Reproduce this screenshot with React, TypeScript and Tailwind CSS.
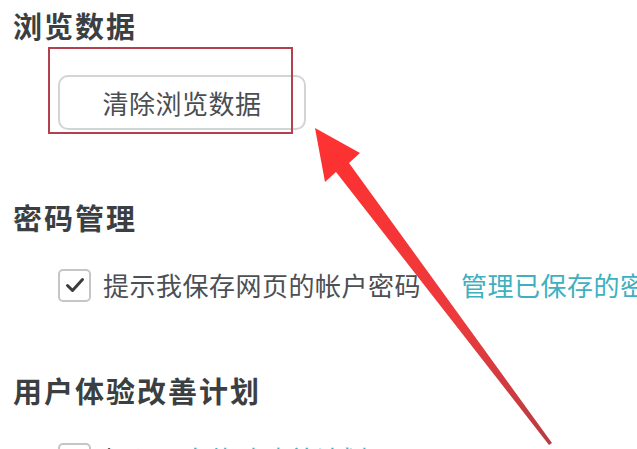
import React from 'react';

const cjk = { fontFamily: '"Noto Sans CJK SC", "Noto Sans", sans-serif' };

function Heading({ children, className = '' }: { children: React.ReactNode; className?: string }) {
  return (
    <div className={`h-[30px] flex items-center text-[29px] leading-none font-semibold text-[#3b3f42] tracking-[2px] ${className}`}>
      {children}
    </div>
  );
}

function Checkbox({ checked }: { checked?: boolean }) {
  return (
    <div className="w-[33px] h-[33px] rounded-[5px] border-2 border-[#c4c6c8] bg-white flex items-center justify-center shrink-0">
      {checked && (
        <svg width="20" height="16" viewBox="0 0 20 16" fill="none">
          <path d="M2.5 8.5 L7.5 13.5 L17.5 2.5" stroke="#3a3d40" strokeWidth="3" strokeLinecap="round" strokeLinejoin="round" />
        </svg>
      )}
    </div>
  );
}

export default function App() {
  return (
    <div className="relative w-[637px] h-[449px] overflow-hidden bg-white" style={cjk}>
      <div className="flex flex-col pl-[13px] pt-[10px]">
        {/* 浏览数据 */}
        <Heading>浏览数据</Heading>
        <div className="mt-[35px] ml-[45px]">
          <button className="w-[248px] h-[55px] rounded-[10px] border-2 border-[#d2d4d6] bg-white text-[26px] text-[#4a4e52] leading-none tracking-[0.5px] flex items-center justify-center">
            清除浏览数据
          </button>
        </div>

        {/* 密码管理 */}
        <Heading className="mt-[72px]">密码管理</Heading>
        <div className="mt-[36px] ml-[45px] flex items-center h-[34px] text-[26px] leading-none tracking-[0.5px] whitespace-nowrap">
          <Checkbox checked />
          <span className="ml-[12px] text-[#4c5054]">提示我保存网页的帐户密码</span>
          <span className="ml-[40px] text-[#3fb0bf]">管理已保存的密码</span>
        </div>

        {/* 用户体验改善计划 */}
        <Heading className="mt-[73px]">用户体验改善计划</Heading>
        <div className="mt-[37px] ml-[45px] flex items-center h-[34px] text-[26px] leading-none tracking-[0.5px] whitespace-nowrap">
          <Checkbox />
          <span className="ml-[12px] text-[#4c5054]">加入</span>
          <span className="text-[#3fb0bf]">用户体验改善计划</span>
        </div>
      </div>

      {/* red annotation box */}
      <div className="absolute left-[48px] top-[47px] w-[245px] h-[87px] border-2 border-[#b2404e]" />

      {/* red arrow */}
      <svg className="absolute inset-0 pointer-events-none" width="637" height="449" viewBox="0 0 637 449">
        <defs>
          <linearGradient id="arrowFill" x1="315" y1="128" x2="552" y2="445" gradientUnits="userSpaceOnUse">
            <stop offset="0" stopColor="#ff3030" />
            <stop offset="0.6" stopColor="#ec3a3c" />
            <stop offset="1" stopColor="#b63a44" />
          </linearGradient>
          <filter id="soft" x="-10%" y="-10%" width="120%" height="120%">
            <feGaussianBlur stdDeviation="0.7" />
          </filter>
        </defs>
        <polygon
          points="315,128 360,153 349,163 552,443 549,445 336,172 325,182"
          fill="url(#arrowFill)"
          filter="url(#soft)"
        />
      </svg>
    </div>
  );
}
